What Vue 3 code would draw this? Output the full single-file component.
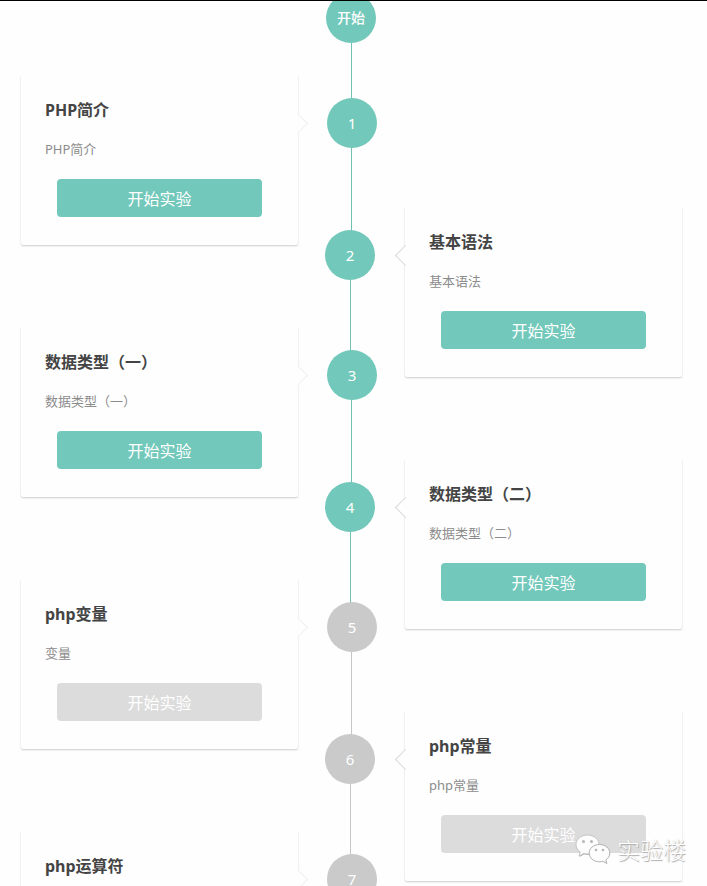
<script setup>
const lessons = [
  { title: 'PHP简介', summary: 'PHP简介', open: true },
  { title: '基本语法', summary: '基本语法', open: true },
  { title: '数据类型（一）', summary: '数据类型（一）', open: true },
  { title: '数据类型（二）', summary: '数据类型（二）', open: true },
  { title: 'php变量', summary: '变量', open: false },
  { title: 'php常量', summary: 'php常量', open: false },
  { title: 'php运算符', summary: 'php运算符', open: false }
]
</script>

<template>
  <main class="page">
    <div class="row start">
      <div class="track">
        <span class="node">开始</span>
        <span class="line"></span>
      </div>
    </div>
    <ol class="lessons">
      <li v-for="(lesson, i) in lessons" :key="lesson.title" class="row lesson" :class="{ locked: !lesson.open }">
        <div class="track">
          <span class="node number">{{ i + 1 }}</span>
          <span class="line"></span>
        </div>
        <article class="card">
          <h2 class="title">{{ lesson.title }}</h2>
          <p class="summary">{{ lesson.summary }}</p>
          <button type="button" class="action">开始实验</button>
        </article>
      </li>
    </ol>
    <div class="watermark">
      <svg class="logo" viewBox="0 0 36 32" aria-hidden="true">
        <path class="shade" d="M12.5 2C6 2 1.500 6.200 1.500 11.500c0 3.200 1.600 5.700 4.200 7.400L4.500 23l4.600-2.500c1.200.3 2.300.4 3.500.4C19 20.900 24 16.700 24 11.500S19 2 12.500 2Z" />
        <path class="bubble" d="M12.500 1C6 1 1 5.200 1 10.500c0 3.200 1.600 5.700 4.200 7.400L4 22l4.600-2.500c1.200.3 2.500.4 3.900.4C19 19.900 24 15.700 24 10.500S19 1 12.500 1Z" />
        <circle class="eye" cx="8.500" cy="7.500" r="1.500" />
        <circle class="eye" cx="16.500" cy="7.500" r="1.500" />
        <path class="bubble front" d="M24.500 10.500c-5.800 0-10.300 3.800-10.300 8.600s4.500 8.700 10.300 8.700c1.200 0 2.300-.2 3.400-.5l4 2.200-1.100-3.600c2.500-1.600 4-4 4-6.800 0-4.800-4.500-8.600-10.300-8.600Z" />
        <circle class="eye" cx="21" cy="16" r="1.300" />
        <circle class="eye" cx="28" cy="16" r="1.300" />
      </svg>
      <span>实验楼</span>
    </div>
  </main>
</template>

<style>
body {
  background: #fefefe;
}
</style>

<style scoped>
.page {
  position: relative;
  box-sizing: border-box;
  height: 100vh;
  overflow: hidden;
  border-top: 1px solid #000;
  font-family: "Noto Sans", "Noto Sans CJK SC", sans-serif;
  color: #444;
}

.row {
  display: grid;
  grid-template-columns: 1fr 107px 1fr;
  padding: 0 25px 0 21px;
}

.track {
  grid-column: 2;
  grid-row: 1;
  display: flex;
  flex-direction: column;
  width: 50px;
  margin-left: 28px;
}

.node {
  display: flex;
  flex: none;
  align-items: center;
  justify-content: center;
  height: 50px;
  border-radius: 50%;
  background: #72c8ba;
  color: #fff;
  font-size: 14px;
  font-weight: 500;
  line-height: 20px;
}

.line {
  flex: 1;
  width: 1px;
  margin-left: 25px;
  background: #72c0b3;
}

.start {
  margin-top: -8px;
}

.start .line {
  flex: none;
  height: 55px;
}

.lessons {
  margin: -25px 0 0;
  padding: 0;
  list-style: none;
}

.lesson .track {
  padding-top: 25px;
}

.lesson:nth-child(odd) {
  margin-bottom: -40px;
}

.lesson:nth-child(even) {
  margin-bottom: -52px;
}

.lesson:nth-child(odd) .track {
  margin-left: 29px;
}

.lesson:nth-child(odd) .line {
  margin-left: 24px;
}

.lesson:nth-child(even) .track {
  margin-left: 27px;
}

.number {
  font-size: 15px;
  font-weight: 400;
}

.locked .node {
  background: #cacaca;
}

.locked .line {
  background: #c6c6c6;
}

.card {
  position: relative;
  grid-column: 1;
  grid-row: 1;
  padding: 25px 24px 28px;
  border-radius: 2px;
  background: #fefefe;
  box-shadow: 0 1px 2px rgba(0, 0, 0, 0.2);
}

.card::before {
  content: "";
  position: absolute;
  top: -3px;
  left: -3px;
  right: -3px;
  height: 6px;
  background: #fefefe;
}

.lesson:nth-child(even) .card {
  grid-column: 3;
}

.card::after {
  content: "";
  position: absolute;
  top: 43px;
  right: -7px;
  width: 14px;
  height: 14px;
  border: solid #f0f0f0;
  border-width: 1px 1px 0 0;
  background: #fefefe;
  transform: rotate(45deg);
}

.lesson:nth-child(even) .card::after {
  right: auto;
  left: -7px;
  border-color: #d8d8d8;
  border-width: 0 0 1px 1px;
}

.title {
  margin: 0 0 17px;
  font-size: 16px;
  line-height: 24px;
  font-weight: 700;
}

.summary {
  margin: 0 0 20px;
  font-size: 13px;
  line-height: 20px;
  color: #8c8c8c;
}

.action {
  display: block;
  width: calc(100% - 24px);
  height: 38px;
  margin: 0 12px;
  padding: 0;
  border: 0;
  border-radius: 4px;
  background: #72c8ba;
  color: #fff;
  font-family: inherit;
  font-size: 16px;
  cursor: pointer;
}

.locked .action {
  background: #dcdcdc;
}

.watermark {
  position: absolute;
  right: 21px;
  bottom: 19px;
  display: flex;
  align-items: center;
  gap: 6px;
  font-size: 23px;
  line-height: 34px;
  font-weight: 300;
  color: #fff;
  text-shadow: 1px 1px 1px #aaa, 0 0 1px #ccc;
}

.logo {
  width: 36px;
  height: 32px;
}

.shade {
  fill: #b5b5b5;
}

.bubble {
  fill: #fdfdfd;
  stroke: #c4c4c4;
  stroke-width: 1;
}

.front {
  stroke: #b0b0b0;
}

.eye {
  fill: #b5b5b5;
}
</style>
